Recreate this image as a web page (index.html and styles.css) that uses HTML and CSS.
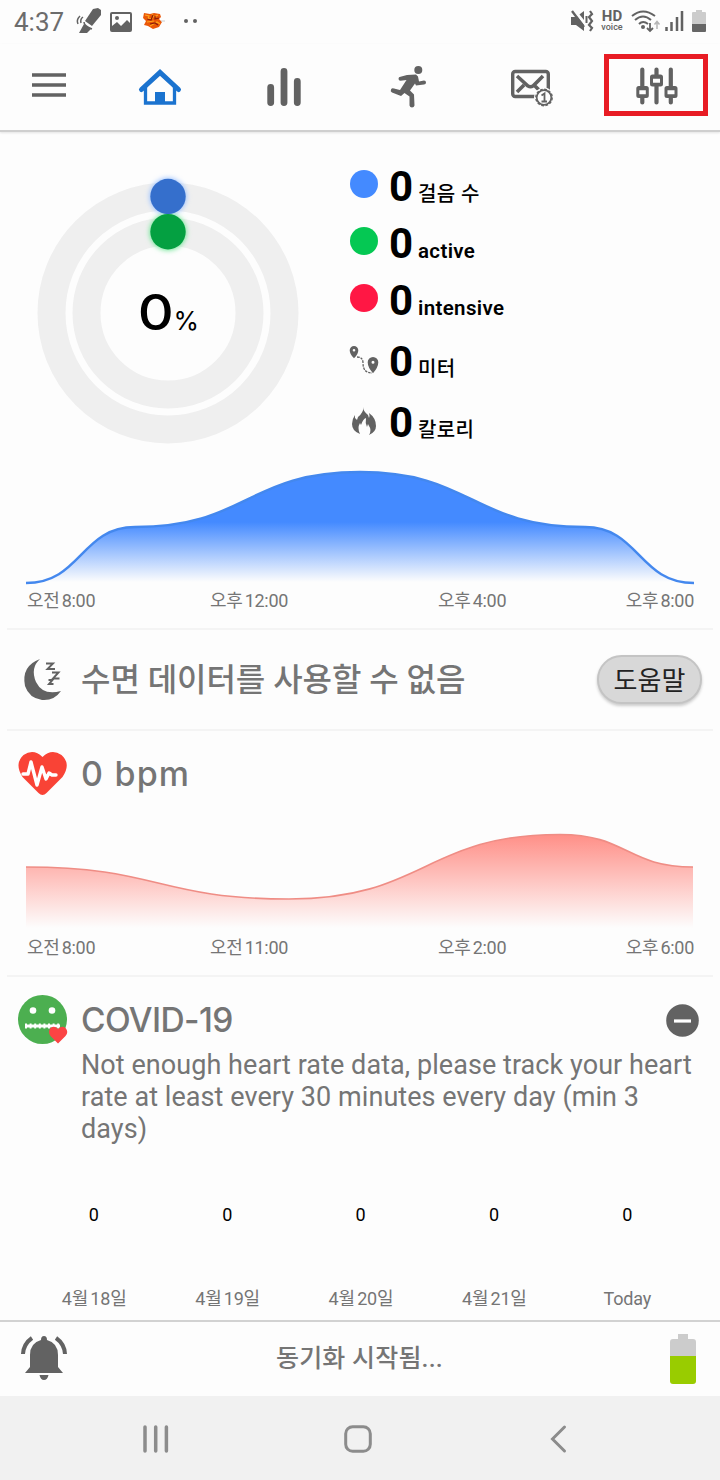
FILE: index.html
```html
<!DOCTYPE html>
<html lang="ko">
<head>
<meta charset="utf-8">
<title>Activity</title>
<link rel="stylesheet" href="styles.css">
</head>
<body>
<div class="status">
  <div class="status-left">
    <span class="clock">4:37</span>
    <svg class="s-band" width="26" height="26" viewBox="0 0 26 26"><path d="M17 1l5-1 3 2v5l-9 11-7-5z" fill="#626262"/><path d="M8 16l7 5-4 4H3z" fill="#626262"/><path d="M8 14q0 4 8 7M7 9q-3 2-2 6M4 8q-4 4-2 8" fill="none" stroke="#626262" stroke-width="1.5"/></svg>
    <svg class="s-photo" width="22" height="20" viewBox="0 0 22 20"><rect x="1" y="1" width="20" height="18" rx="1" fill="none" stroke="#626262" stroke-width="2"/><path d="M2 14l5-4 4 4 6-6 4 4v7H2z" fill="#626262"/><circle cx="7" cy="6" r="2" fill="#626262"/></svg>
    <svg class="s-app" width="22" height="18" viewBox="0 0 22 18"><path d="M1 1l6 1 4-1 6 1 1 3-2 2 3 3-3 5-6 2-5-3-4-1 2-4-3-3z" fill="#ea5708"/><path d="M2 3l4 1-1 3 5-1M9 2l2 3 4-2M4 10l7-1M7 14l7-4 3 2" fill="none" stroke="#ffa51a" stroke-width="1.2"/><path d="M4 7l4 1 2-5M12 4v3l4-1M7 12l5-1 3 2" fill="none" stroke="#8b1b08" stroke-width="1.2"/><path d="M18 9h4" stroke="#ccc"/></svg>
    <svg class="s-dots" width="14" height="4" viewBox="0 0 14 4"><circle cx="2" cy="2" r="2" fill="#626262"/><circle cx="11" cy="2" r="2" fill="#626262"/></svg>
  </div>
  <div class="status-right">
    <svg width="23" height="22" viewBox="0 0 23 22"><path d="M0 7h5l8-6v20l-8-6H0z" fill="#626262"/><path d="M3 0l12 15" stroke="#fdfdfd" stroke-width="3"/><path d="M1 1l12 16" stroke="#626262" stroke-width="2.400"/><path d="M19 1l2 3-3 3 3 4-3 4 3 3-2 3" fill="none" stroke="#626262" stroke-width="2.200"/><path d="M15.500 6v7" stroke="#626262" stroke-width="2"/></svg>
    <span class="hd"><b>HD</b><i>voice</i></span>
    <svg class="s-wifi" width="28" height="22" viewBox="0 0 28 22"><path d="M1 6q11-9 23 0M4 10q8-7 16 0M8 14q4-4 9 0" fill="none" stroke="#626262" stroke-width="2"/><circle cx="12" cy="17" r="2" fill="#626262"/><path d="M19 13v8M16 18l3 3 3-3" fill="none" stroke="#626262" stroke-width="1.800"/><path d="M26 19v-7M23.500 14.500l2.500-3 2.500 3" fill="none" stroke="#b5b5b5" stroke-width="1.500"/></svg>
    <svg class="s-signal" width="19" height="20" viewBox="0 0 19 20"><path d="M1.500 16v4M6.500 11v9M12 6v14M17 0v20" stroke="#626262" stroke-width="2.500"/></svg>
    <svg class="s-battery" width="14" height="22" viewBox="0 0 14 22"><path d="M4 0h6v2h3q1 0 1 1v11H0V3q0-1 1-1h3z" fill="#ccc"/><path d="M0 14h14v7q0 1-1 1H1q-1 0-1-1z" fill="#666"/></svg>
  </div>
</div>
<nav class="toolbar">
  <div class="tool menu"><svg width="34" height="24" viewBox="0 0 34 24"><path d="M0 2h34M0 12h34M0 22h34" stroke="#626262" stroke-width="3.500"/></svg></div>
  <div class="tool"><svg width="44" height="38" viewBox="0 0 44 38"><path d="M7.500 19v16h29V19" fill="none" stroke="#1b73cf" stroke-width="3.300"/><path d="M3.500 21.500L22 4.500l18.500 17" fill="none" stroke="#1b73cf" stroke-width="5" stroke-linecap="round"/><path d="M17 24h10v12H17z" fill="#1b73cf"/></svg></div>
  <div class="tool"><svg width="34" height="38" viewBox="0 0 34 38"><path d="M3.700 19.500v15M17 3.500v31M30.300 13.500v21" stroke="#626262" stroke-width="6.800" stroke-linecap="round"/></svg></div>
  <div class="tool"><svg width="36" height="42" viewBox="0 0 36 42"><circle cx="28.300" cy="4" r="4" fill="#626262"/><path d="M17 9l9-.5 2 2 1 5 5-1q2 0 2 2t-2 2l-8 1-1-2-5 7 4 4 .5 11q-.5 2-2.500 2t-2.500-2v-9l-5-3.500L11 30l-9-3.500q-2-1-1-3t3-1l6 1.500 6.500-10-6 .7q-2 0-2-2t2-2z" fill="#626262"/></svg></div>
  <div class="tool"><svg width="42" height="38" viewBox="0 0 42 38"><rect x="1.700" y="3.500" width="35.600" height="25" rx="2.500" fill="none" stroke="#626262" stroke-width="3.400"/><path d="M6 8l11 10q2.500 1.500 5 0L32 8M6 24l7-7M23 17l6 6" fill="none" stroke="#626262" stroke-width="3.600"/><circle cx="33" cy="29.500" r="10" fill="#fdfdfd"/><circle cx="33" cy="29.500" r="7.300" fill="none" stroke="#626262" stroke-width="1.700"/><circle cx="33" cy="29.500" r="8.200" fill="none" stroke="#626262" stroke-width="1.400" stroke-dasharray="2.700 1.594"/><path d="M30.500 27.500l3-2v8M30.500 33.500h5.500" fill="none" stroke="#626262" stroke-width="1.800"/></svg></div>
  <div class="tool marked"><svg width="42" height="38" viewBox="0 0 42 38"><path d="M6.300 2.500v33M20.500 2.500v33M34.800 2.500v33" stroke="#626262" stroke-width="4.200" stroke-linecap="round"/><g fill="#fdfdfd" stroke="#626262" stroke-width="3"><rect x="1.800" y="20.500" width="9.500" height="9" rx="1"/><rect x="15.500" y="9" width="10" height="9" rx="1"/><rect x="30" y="20.500" width="10" height="9" rx="1"/></g><path d="M1.500 22h10M15.500 10.500h10M30 22h10M1.500 28.500h10M15.500 17h10M30 28.500h10" stroke="#626262" stroke-width="2.400"/></svg></div>
</nav>

<section class="activity">
  <div class="summary">
    <div class="rings">
      <svg width="280" height="280" viewBox="0 0 280 280">
        <defs><filter id="glow" x="-40%" y="-40%" width="180%" height="180%"><feGaussianBlur stdDeviation="2.500"/></filter></defs>
        <circle cx="140" cy="140" r="116.500" fill="none" stroke="#efefef" stroke-width="28"/>
        <circle cx="140" cy="140" r="81.500" fill="none" stroke="#efefef" stroke-width="28"/>
        <circle cx="140" cy="23.500" r="18.500" fill="#9bc2ff" filter="url(#glow)"/>
        <circle cx="140" cy="59" r="18.500" fill="#70e696" filter="url(#glow)"/>
        <circle cx="140" cy="23.500" r="17.700" fill="#356fcc"/>
        <circle cx="140" cy="58.700" r="17.700" fill="#04a041"/>
      </svg>
      <div class="percent"><span class="percent-num">0</span><span class="percent-sign">%</span></div>
    </div>
    <div class="stats">
      <div class="stat"><span class="dot blue"></span><b>0</b><span class="unit ko">걸음 수</span></div>
      <div class="stat"><span class="dot green"></span><b>0</b><span class="unit">active</span></div>
      <div class="stat"><span class="dot red"></span><b>0</b><span class="unit">intensive</span></div>
      <div class="stat late"><svg class="stat-icon" width="28" height="28" viewBox="0 0 28 28"><path fill-rule="evenodd" d="M4 0a4.300 4.300 0 0 1 4.300 4.300q0 4-4.300 8-4.300-4-4.300-8A4.300 4.300 0 0 1 4 0zM4 2.900a1.300 1.300 0 1 0 0 2.600 1.300 1.300 0 1 0 0-2.600zM23 11a5.300 5.300 0 0 1 5.300 5.300q0 5-5.300 11-5.300-6-5.300-11A5.300 5.300 0 0 1 23 11zm0 3.700a1.500 1.500 0 1 0 0 3 1.500 1.500 0 1 0 0-3z" fill="#626262"/><path d="M7 11q6 0 6 6 0 10 9 10" fill="none" stroke="#626262" stroke-width="1.300" stroke-dasharray="2.500 1"/></svg><b>0</b><span class="unit ko">미터</span></div>
      <div class="stat late"><svg class="stat-icon" width="28" height="28" viewBox="0 0 28 28"><path d="M13 0q0 4 5 8l1 3q1-2 0-5 7 5 7 13 0 6-7 9 3-5 0-9l-1-2-1 3q-2-4-1-9-3 1-5 7l-1-2q-3 5 0 11-8-3-8-10 0-5 3-9v3l2 2 1-3q6-5 5-10z" fill="#626262"/></svg><b>0</b><span class="unit ko">칼로리</span></div>
    </div>
  </div>
  <svg class="chart" width="668" height="116" viewBox="26 469 668 116">
    <defs><linearGradient id="blueFade" gradientUnits="userSpaceOnUse" x1="0" y1="469" x2="0" y2="582"><stop offset="0" stop-color="#448aff"/><stop offset=".47" stop-color="#448aff"/><stop offset="1" stop-color="#448aff" stop-opacity="0"/></linearGradient></defs>
    <path d="M26 583C81 583 81 527 135 527C247 527 247 472 360 472C472 472 472 527 585 527C639 527 639 583 694 583z" fill="url(#blueFade)"/>
    <path d="M26 583C81 583 81 527 135 527C247 527 247 472 360 472C472 472 472 527 585 527C639 527 639 583 694 583" fill="none" stroke="#4488ee" stroke-width="2.400"/>
  </svg>
  <div class="axis"><span>오전 8:00</span><span>오후 12:00</span><span>오후 4:00</span><span>오후 8:00</span></div>
</section>

<section class="sleep">
  <svg class="moon" width="40" height="42" viewBox="0 0 40 42"><path d="M16 0Q6 9 12 23q7 14 25 9Q30 42 18 41 5 39 1 27-3 7 16 0z" fill="#626262"/><path d="M22 4.500h7l-5.500 5.500h7.500M28 13.500h6.500l-5.500 6h6.500M24.500 21h4l-3.500 4h4.500" fill="none" stroke="#626262" stroke-width="1.900"/></svg>
  <h2 class="sleep-title">수면 데이터를 사용할 수 없음</h2>
  <button class="help">도움말</button>
</section>

<section class="heart">
  <div class="heart-head">
    <svg width="50" height="44" viewBox="0 0 50 44"><path d="M24.500 5Q33.500-4 43.500 3q10 9 1 22L28.500 41q-4 4-8 0L4.500 25Q-4 12 5.500 3q10-7 19 2z" fill="#f94336"/><path d="M5 22h5l3-12 6 23 5-18 4 12 3-6 3 2h4" fill="none" stroke="#fff" stroke-width="3.400" stroke-linejoin="round" stroke-linecap="round"/></svg>
    <h2 class="bpm">0 bpm</h2>
  </div>
  <svg class="chart" width="668" height="98" viewBox="26 832 668 98">
    <defs><linearGradient id="redFade" gradientUnits="userSpaceOnUse" x1="0" y1="832" x2="0" y2="928"><stop offset="0" stop-color="#ff8c84"/><stop offset="1" stop-color="#ff8c84" stop-opacity="0"/></linearGradient></defs>
    <path d="M26 867C158 867 158 899 289 899C425 899 425 834.500 560 834.500C627 834.500 627 867 693 867V930H26z" fill="url(#redFade)"/>
    <path d="M26 867C158 867 158 899 289 899C425 899 425 834.500 560 834.500C627 834.500 627 867 693 867" fill="none" stroke="#ef8d85" stroke-width="1.600"/>
  </svg>
  <div class="axis"><span>오전 8:00</span><span>오전 11:00</span><span>오후 2:00</span><span>오후 6:00</span></div>
</section>

<section class="covid">
  <div class="covid-head">
    <svg width="50" height="50" viewBox="0 0 50 50"><circle cx="24.500" cy="24.500" r="24.500" fill="#4caf50"/><circle cx="15" cy="15.500" r="3.300" fill="#fff"/><circle cx="34" cy="15.500" r="3.300" fill="#fff"/><path d="M7 31h35" stroke="#fff" stroke-width="2.800"/><path d="M7 31h35" stroke="#fff" stroke-width="5" stroke-dasharray="2 2.600"/><path d="M40 34q4-4 7.500-1 3.500 4 0 8L40 48.500 32.500 41q-3-4 0-8 4-3 7.500 1z" fill="#fb4444"/></svg>
    <h2 class="covid-title">COVID-19</h2>
    <svg width="33" height="33" viewBox="0 0 33 33"><circle cx="16.500" cy="16.500" r="16.300" fill="#626262"/><path d="M8 17h17" stroke="#fff" stroke-width="3.200"/></svg>
  </div>
  <p class="note">Not enough heart rate data, please track your heart<br>rate at least every 30 minutes every day (min 3<br>days)</p>
  <div class="days values"><span>0</span><span>0</span><span>0</span><span>0</span><span>0</span></div>
  <div class="days"><span class="date">4월 18일</span><span class="date">4월 19일</span><span class="date">4월 20일</span><span class="date">4월 21일</span><span>Today</span></div>
</section>

<footer class="sync">
  <svg width="46" height="46" viewBox="0 0 46 46"><path d="M23 0q3 0 3 4 11 3 11 15v12l5 6H4l5-6V19Q9 7 20 4q0-4 3-4zM18.500 39h9q-1 5-4.500 5t-4.500-5z" fill="#626262"/><path d="M11 2Q2.500 8 2 18M35 2q8.500 6 9 16" fill="none" stroke="#626262" stroke-width="4"/></svg>
  <span class="sync-text">동기화 시작됨...</span>
  <svg width="26" height="50" viewBox="0 0 26 50"><path d="M8 0h10v5h5q3 0 3 3v14H0V8q0-3 3-3h5z" fill="#ccc"/><path d="M0 22h26v25q0 3-3 3H3q-3 0-3-3z" fill="#99cc00"/></svg>
</footer>
<div class="system-nav">
  <svg width="26" height="28" viewBox="0 0 26 28"><path d="M2 2v24M12.700 2v24M23.400 2v24" stroke="#8c8c8c" stroke-width="3.500" stroke-linecap="round"/></svg>
  <svg width="28" height="28" viewBox="0 0 28 28"><rect x="1.700" y="1.700" width="24.600" height="24.600" rx="7" fill="none" stroke="#8c8c8c" stroke-width="3"/></svg>
  <svg width="16" height="28" viewBox="0 0 16 28"><path d="M14.500 2L2.500 14l12 12" fill="none" stroke="#8c8c8c" stroke-width="3" stroke-linecap="round"/></svg>
</div>
</body>
</html>
```
FILE: styles.css
```css
* { box-sizing: border-box; }
body {
  margin: 0;
  width: 720px;
  height: 1480px;
  overflow: hidden;
  background: #fdfdfd;
  color: #757575;
  font-family: Roboto, "Noto Sans CJK KR", sans-serif;
}
svg { display: block; flex: none; overflow: visible; }
h2, p { margin: 0; font-weight: 500; }

.status { height: 44px; display: flex; justify-content: space-between; padding: 0 14px 0 14px; }
.status-left, .status-right { display: flex; align-items: center; height: 42px; }
.clock { font-size: 26px; line-height: 42px; width: 62px; color: #6c6c6c; padding-top: 2px; }
.s-photo { margin-left: 8px; margin-top: 2px; }
.s-app { margin-left: 11px; }
.s-dots { margin-left: 19px; }
.hd { display: flex; flex-direction: column; align-items: center; width: 24px; margin-left: 6px; color: #626262; }
.hd b { font-size: 15px; line-height: 13px; font-weight: 700; }
.hd i { font-size: 9px; line-height: 11px; font-style: normal; font-weight: 500; margin-top: -1px; }
.s-wifi { margin-left: 7px; }
.s-signal { margin-left: 6px; }
.s-battery { margin-left: 8px; }

.toolbar {
  height: 88px;
  display: grid;
  grid-template-columns: 98px repeat(5, 124px);
  padding: 10px 0 14px;
  border-bottom: 2px solid #cfcfcf;
  box-shadow: 0 1px 2px #e4e4e4;
}
.tool { display: flex; align-items: center; justify-content: center; padding-top: 3px; }
.tool.menu { padding-top: 0; }
.marked { width: 104px; margin: 0 10px; border: 5px solid #e81c24; padding-left: 2px; padding-top: 2px; }

.activity { height: 498px; border-bottom: 2px solid #f4f4f4; margin: 0 7px; padding: 0 19px; }
.summary { display: flex; height: 337px; padding-top: 41px; }
.rings { display: grid; width: 280px; margin-left: 2px; }
.rings > * { grid-area: 1 / 1; }
.percent { display: flex; align-items: baseline; justify-content: center; height: 64px; align-self: start; margin-top: 108px; line-height: 64px; color: #000; font-family: Inter, sans-serif; padding-left: 3px; }
.percent-num { font-size: 49px; font-weight: 500; transform: scaleX(1.14); margin-right: 2px; }
.percent-sign { font-size: 26px; }
.stats { margin-left: 42px; margin-top: -10px; color: #000; }
.stat { display: flex; align-items: baseline; height: 57px; }
.stat.late { height: 61px; padding-top: 4px; }
.stat b { font-size: 42px; line-height: 48px; width: 29px; font-weight: 700; margin-left: 11px; }
.unit { font-size: 20.5px; line-height: 24px; font-weight: 600; letter-spacing: 0.35px; }
.unit.ko { font-size: 20px; font-weight: 500; letter-spacing: 0.4px; }
.dot { width: 28px; height: 28px; border-radius: 50%; align-self: flex-start; margin-top: 7px; }
.stat-icon { align-self: flex-start; margin-top: 8px; }
.blue { background: #448aff; }
.green { background: #05c853; }
.red { background: #ff1744; }
.activity .chart { margin-top: 0; }

.axis { display: grid; grid-template-columns: 183px 228px 1fr auto; font-size: 18px; line-height: 22px; letter-spacing: -0.3px; word-spacing: -2px; padding: 0 0 0 1px; margin-top: 5px; white-space: nowrap; }

.sleep { height: 101px; margin: 0 7px; border-bottom: 2px solid #f4f4f4; display: flex; align-items: center; padding: 0 11px 0 17px; }
.sleep-title { flex: 1; margin-left: 17px; font-size: 32px; line-height: 40px; font-weight: 500; letter-spacing: -0.05px; padding-top: 1px; }
.help { width: 105px; height: 49px; border: 2px solid #c4c4c4; border-radius: 25px; background: #d8d8d8; color: #222; font: 400 26px/42px Roboto, "Noto Sans CJK KR", sans-serif; padding: 2px 0 0; box-shadow: 0 2px 3px #ccc; }

.heart { height: 246px; margin: 0 7px; border-bottom: 2px solid #f4f4f4; padding: 21px 19px 0; }
.heart-head { display: flex; height: 80px; margin-left: -8px; }
.bpm { font: 500 34px/44px Inter, sans-serif; margin-left: 13px; letter-spacing: 1.2px; }
.heart .axis { margin-top: 7px; }

.covid { height: 343px; padding: 18px 21px 0 18px; }
.covid-head { display: flex; align-items: center; height: 50px; }
.covid-title { flex: 1; font: 500 33.5px/50px Inter, sans-serif; margin-left: 13px; letter-spacing: -0.6px; }
.note { margin: 4px 0 0 63px; font-size: 27px; line-height: 32px; font-weight: 400; letter-spacing: 0.06px; white-space: nowrap; }
.days { display: grid; grid-template-columns: repeat(5, 133.4px); margin-left: 9px; text-align: center; font-size: 18px; line-height: 24px; letter-spacing: -0.2px; }
.date { padding-left: 1px; word-spacing: -2px; }
.values { color: #000; margin: 58px 0 60px 9px; }

.sync { height: 76px; border-top: 2px solid #d2d2d2; display: flex; align-items: center; justify-content: space-between; padding: 0 24px 1px 21px; }
.sync-text { font-size: 25px; line-height: 36px; font-weight: 500; margin-left: -18px; letter-spacing: 0.2px; }
.system-nav { height: 84px; background: #f1f1f1; display: grid; grid-template-columns: 201px 206px auto; align-items: center; padding: 2px 0 0 143px; }
```
